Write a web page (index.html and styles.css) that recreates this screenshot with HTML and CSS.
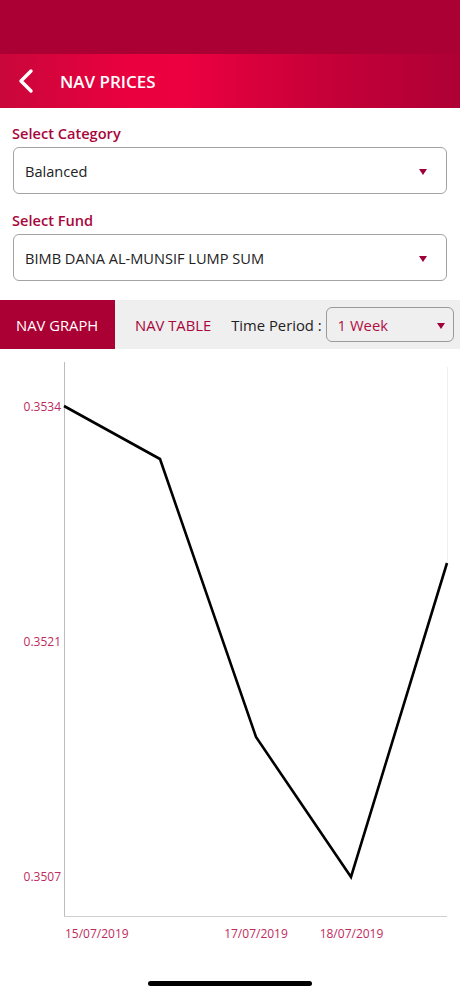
FILE: index.html
```html
<!DOCTYPE html>
<html lang="en">

<head>
  <meta charset="UTF-8">
  <meta name="viewport" content="width=device-width, initial-scale=1.0">
  <title>NAV Prices</title>
  <link rel="stylesheet" href="styles.css">
</head>

<body>
  <div class="status-bar"></div>
  <header class="top-bar">
    <svg class="back" width="18" height="26" viewBox="0 0 18 26">
      <path d="M14 3 L4 13 L14 23" fill="none" stroke="#fff" stroke-width="3.4" stroke-linecap="round" stroke-linejoin="round" />
    </svg>
    <h1>NAV PRICES</h1>
  </header>

  <div class="form">
    <label class="field-label">Select Category</label>
    <div class="select">
      <span>Balanced</span>
      <span class="caret"></span>
    </div>

    <label class="field-label fund">Select Fund</label>
    <div class="select">
      <span>BIMB DANA AL-MUNSIF LUMP SUM</span>
      <span class="caret"></span>
    </div>
  </div>

  <div class="tabs">
    <div class="tab active">NAV GRAPH</div>
    <div class="tab">NAV TABLE</div>
    <div class="period-label">Time Period :</div>
    <div class="period-select">
      <span>1 Week</span>
      <span class="caret"></span>
    </div>
  </div>

  <svg class="chart" width="460" height="600" viewBox="0 0 460 600">
    <line x1="64.5" y1="13" x2="64.5" y2="567.5" stroke="#bdbdbd" stroke-width="1" />
    <line x1="64" y1="567.5" x2="447" y2="567.5" stroke="#cfcfcf" stroke-width="1" />
    <line x1="447.5" y1="18" x2="447.5" y2="214" stroke="#f0f0f0" stroke-width="1" />
    <polyline points="64,57 160,110 256,388 351,528 447,214" fill="none" stroke="#000" stroke-width="2.6" stroke-linejoin="miter" />
    <g class="y-labels">
      <text x="61" y="62" text-anchor="end">0.3534</text>
      <text x="61" y="297" text-anchor="end">0.3521</text>
      <text x="61" y="532" text-anchor="end">0.3507</text>
    </g>
    <g class="x-labels">
      <text x="65" y="589">15/07/2019</text>
      <text x="256" y="589" text-anchor="middle">17/07/2019</text>
      <text x="351.5" y="589" text-anchor="middle">18/07/2019</text>
    </g>
  </svg>

  <div class="home-indicator"></div>
</body>

</html>
```

FILE: styles.css
```css
body {
  margin: 0;
  font-family: "Open Sans", "Noto Sans", sans-serif;
  background-color: #fff;
  width: 460px;
  height: 996px;
  overflow: hidden;
}

.status-bar {
  height: 54px;
  background-color: #ab0033;
}

.top-bar {
  height: 54px;
  display: flex;
  align-items: center;
  padding-left: 17px;
  background: linear-gradient(90deg, #c9073a 0%, #ea003f 28%, #ec0040 40%, #c70039 70%, #ae0035 100%);
}

.top-bar .back {
  display: block;
}

.top-bar h1 {
  margin: 0 0 0 25px;
  color: #fff;
  font-size: 17px;
  font-weight: 600;
}

.form {
  padding: 15px 13px 0 13px;
}

.field-label {
  display: block;
  height: 20px;
  line-height: 20px;
  margin: 0 0 4px -1px;
  color: #a8063c;
  font-size: 14.6px;
  font-weight: 600;
}

.field-label.fund {
  margin-top: 16px;
}

.select {
  height: 47px;
  box-sizing: border-box;
  border: 1.5px solid #a3a3a3;
  border-radius: 6px;
  display: flex;
  align-items: center;
  justify-content: space-between;
  padding: 0 19px 0 11px;
  color: #222;
  font-size: 14.6px;
}

/* small filled triangle used by all dropdowns */
.caret {
  width: 0;
  height: 0;
  border-left: 4px solid transparent;
  border-right: 4px solid transparent;
  border-top: 6px solid #a0003a;
  margin-top: 2px;
}

.tabs {
  margin-top: 19px;
  height: 49px;
  background-color: #efefef;
  display: flex;
  align-items: center;
  white-space: nowrap;
}

.tab {
  height: 100%;
  display: flex;
  align-items: center;
  padding: 0 20px 0 20px;
  color: #a8063c;
  font-size: 14.8px;
}

.tab.active {
  flex: 0 0 115px;
  box-sizing: border-box;
  padding: 0 0 0 16px;
  background-color: #ab0033;
  color: #fff;
}

.period-label {
  color: #222;
  font-size: 14.8px;
}

.period-select {
  margin-left: 4px;
  width: 128px;
  height: 35px;
  box-sizing: border-box;
  border: 1.5px solid #9a9a9a;
  border-radius: 6px;
  display: flex;
  align-items: center;
  justify-content: space-between;
  padding: 0 8px 0 11px;
  color: #b0103f;
  font-size: 14.8px;
}

.chart {
  display: block;
}

.chart text {
  font-family: "Open Sans", "Noto Sans", sans-serif;
  font-size: 12px;
  fill: #c02a5e;
}

.home-indicator {
  width: 164px;
  height: 5px;
  border-radius: 3px;
  background-color: #000;
  margin: 32px auto 0;
}
```
